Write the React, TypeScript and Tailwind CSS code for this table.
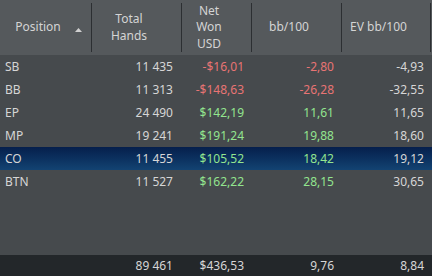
import React from "react";

type Row = {
  pos: string;
  hands: string;
  won: string;
  bb: string;
  ev: string;
  neg: boolean;
};

const rows: Row[] = [
  { pos: "SB", hands: "11 435", won: "-$16,01", bb: "-2,80", ev: "-4,93", neg: true },
  { pos: "BB", hands: "11 313", won: "-$148,63", bb: "-26,28", ev: "-32,55", neg: true },
  { pos: "EP", hands: "24 490", won: "$142,19", bb: "11,61", ev: "11,65", neg: false },
  { pos: "MP", hands: "19 241", won: "$191,24", bb: "19,88", ev: "18,60", neg: false },
  { pos: "CO", hands: "11 455", won: "$105,52", bb: "18,42", ev: "19,12", neg: false },
  { pos: "BTN", hands: "11 527", won: "$162,22", bb: "28,15", ev: "30,65", neg: false },
];

function HeadCell({ w, children, arrow }: { w: string; children: React.ReactNode; arrow?: boolean }) {
  return (
    <div className={`${w} relative flex h-full items-center border-r border-[#2c2f32] pr-[15px]`}>
      <div className="flex-1 text-center leading-[16.5px]">{children}</div>
      {arrow && (
        <svg className="absolute right-[9px] top-[25px]" width="7" height="4" viewBox="0 0 7 4">
          <path d="M0 4 L3.5 0 L7 4 Z" fill="#d0d0d0" />
        </svg>
      )}
    </div>
  );
}

export default function App() {
  return (
    <div
      className="flex h-[276px] w-[432px] flex-col bg-[#464a4d] text-[12px] text-[#d6d6d6]"
      style={{ fontFamily: '"Noto Sans", "Open Sans", sans-serif' }}
    >
      <div className="flex h-[55px] items-stretch bg-[#55595c] py-[3px] text-[#d4d4d4]">
        <HeadCell w="w-[92px]" arrow>Position</HeadCell>
        <HeadCell w="w-[90px]">
          Total
          <br />
          Hands
        </HeadCell>
        <HeadCell w="w-[70px]">
          Net
          <br />
          Won
          <br />
          USD
        </HeadCell>
        <HeadCell w="w-[90px]">bb/100</HeadCell>
        <HeadCell w="w-[89px]">EV bb/100</HeadCell>
      </div>

      <div className="flex-1">
        {rows.map((r) => {
          const sel = r.pos === "CO";
          const col = r.neg ? "text-[#e87474]" : "text-[#93e58f]";
          return (
            <div
              key={r.pos}
              className={`flex h-[23px] items-center ${
                sel ? "bg-gradient-to-b from-[#061f4c] to-[#134372]" : ""
              }`}
            >
              <div className="w-[92px] pl-[5px]">{r.pos}</div>
              <div className="w-[90px] pr-[9px] text-right">{r.hands}</div>
              <div className={`w-[70px] pr-[8px] text-right ${col}`}>{r.won}</div>
              <div className={`w-[90px] pr-[8px] text-right ${col}`}>{r.bb}</div>
              <div className="w-[89px] pr-[7px] text-right">{r.ev}</div>
            </div>
          );
        })}
      </div>

      <div className="flex h-[21px] items-center bg-[#23272a]">
        <div className="w-[92px]" />
        <div className="w-[90px] pr-[9px] text-right">89 461</div>
        <div className="w-[70px] pr-[8px] text-right">$436,53</div>
        <div className="w-[90px] pr-[8px] text-right">9,76</div>
        <div className="w-[89px] pr-[7px] text-right">8,84</div>
      </div>
    </div>
  );
}
